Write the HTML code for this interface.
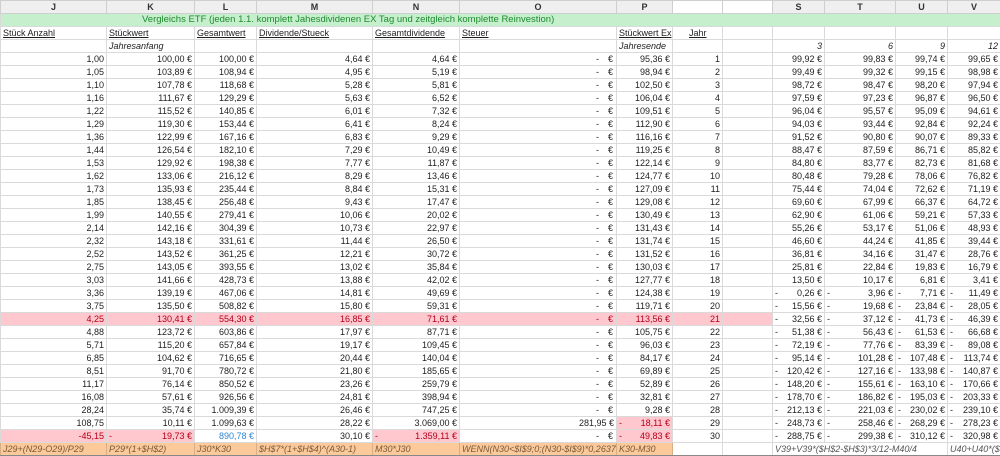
<!DOCTYPE html>
<html><head><meta charset="utf-8"><style>
html,body{margin:0;padding:0;background:#fff;width:1000px;height:456px;overflow:hidden}
table{border-collapse:collapse;table-layout:fixed;width:1000px;font-family:"Liberation Sans",sans-serif;font-size:9px;color:#1e1e1e}
td{height:12px;padding:0 2px;border:1px solid #dadada;text-align:right;white-space:nowrap;overflow:hidden;line-height:12px}
tr.h td{background:#efefef;text-align:center;font-weight:bold;color:#333;border-bottom:1px solid #a8a8a8;border-color:#cfcfcf}
tr.h td.w{background:#fff}
td.t{background:#c6efce;color:#1f8a2e;text-align:left;padding-left:141px;font-size:9.5px}
td.u{text-align:left}
td.u span{text-decoration:underline}
td.it{font-style:italic}
td.l{text-align:left}
i{float:left;font-style:normal}
td.o{padding-right:3px}
.d{margin-right:9px}
.p{background:#ffc7ce;color:#b3001b}
.b{color:#2f86d8}
tr.f td{background:#fbc99a;text-align:left;font-style:italic;color:#7a5a3a;border-color:#d8ae86;border-bottom:1px solid #888}
tr.f td.w{background:#fff;border-color:#dadada;border-bottom:1px solid #888}
</style></head><body>
<table>
<colgroup><col style="width:106px"><col style="width:88px"><col style="width:62px"><col style="width:116px"><col style="width:87px"><col style="width:157px"><col style="width:56px"><col style="width:50px"><col style="width:50px"><col style="width:52px"><col style="width:71px"><col style="width:52px"><col style="width:53px"></colgroup>
<tr class="h"><td>J</td><td>K</td><td>L</td><td>M</td><td>N</td><td>O</td><td>P</td><td class="w"></td><td class="w"></td><td>S</td><td>T</td><td>U</td><td>V</td></tr>
<tr><td colspan="13" class="t">Vergleichs ETF (jeden 1.1. komplett Jahesdividenen EX Tag und zeitgleich komplette Reinvestion)</td></tr>
<tr><td class="u"><span>Stück Anzahl</span></td><td class="u"><span>Stückwert</span></td><td class="u"><span>Gesamtwert</span></td><td class="u"><span>Dividende/Stueck</span></td><td class="u"><span>Gesamtdividende</span></td><td class="u"><span>Steuer</span></td><td class="u"><span>Stückwert Ex</span></td><td class="u" style="padding-left:16px"><span>Jahr</span></td><td></td><td></td><td></td><td></td><td></td></tr>
<tr><td></td><td class="l it">Jahresanfang</td><td></td><td></td><td></td><td></td><td class="l it">Jahresende</td><td></td><td></td><td class="it">3</td><td class="it">6</td><td class="it">9</td><td class="it">12</td></tr>
<tr><td>1,00</td><td>100,00 €</td><td>100,00 €</td><td>4,64 €</td><td>4,64 €</td><td class="o"><span class="d">-</span>€</td><td>95,36 €</td><td>1</td><td></td><td>99,92 €</td><td>99,83 €</td><td>99,74 €</td><td>99,65 €</td></tr>
<tr><td>1,05</td><td>103,89 €</td><td>108,94 €</td><td>4,95 €</td><td>5,19 €</td><td class="o"><span class="d">-</span>€</td><td>98,94 €</td><td>2</td><td></td><td>99,49 €</td><td>99,32 €</td><td>99,15 €</td><td>98,98 €</td></tr>
<tr><td>1,10</td><td>107,78 €</td><td>118,68 €</td><td>5,28 €</td><td>5,81 €</td><td class="o"><span class="d">-</span>€</td><td>102,50 €</td><td>3</td><td></td><td>98,72 €</td><td>98,47 €</td><td>98,20 €</td><td>97,94 €</td></tr>
<tr><td>1,16</td><td>111,67 €</td><td>129,29 €</td><td>5,63 €</td><td>6,52 €</td><td class="o"><span class="d">-</span>€</td><td>106,04 €</td><td>4</td><td></td><td>97,59 €</td><td>97,23 €</td><td>96,87 €</td><td>96,50 €</td></tr>
<tr><td>1,22</td><td>115,52 €</td><td>140,85 €</td><td>6,01 €</td><td>7,32 €</td><td class="o"><span class="d">-</span>€</td><td>109,51 €</td><td>5</td><td></td><td>96,04 €</td><td>95,57 €</td><td>95,09 €</td><td>94,61 €</td></tr>
<tr><td>1,29</td><td>119,30 €</td><td>153,44 €</td><td>6,41 €</td><td>8,24 €</td><td class="o"><span class="d">-</span>€</td><td>112,90 €</td><td>6</td><td></td><td>94,03 €</td><td>93,44 €</td><td>92,84 €</td><td>92,24 €</td></tr>
<tr><td>1,36</td><td>122,99 €</td><td>167,16 €</td><td>6,83 €</td><td>9,29 €</td><td class="o"><span class="d">-</span>€</td><td>116,16 €</td><td>7</td><td></td><td>91,52 €</td><td>90,80 €</td><td>90,07 €</td><td>89,33 €</td></tr>
<tr><td>1,44</td><td>126,54 €</td><td>182,10 €</td><td>7,29 €</td><td>10,49 €</td><td class="o"><span class="d">-</span>€</td><td>119,25 €</td><td>8</td><td></td><td>88,47 €</td><td>87,59 €</td><td>86,71 €</td><td>85,82 €</td></tr>
<tr><td>1,53</td><td>129,92 €</td><td>198,38 €</td><td>7,77 €</td><td>11,87 €</td><td class="o"><span class="d">-</span>€</td><td>122,14 €</td><td>9</td><td></td><td>84,80 €</td><td>83,77 €</td><td>82,73 €</td><td>81,68 €</td></tr>
<tr><td>1,62</td><td>133,06 €</td><td>216,12 €</td><td>8,29 €</td><td>13,46 €</td><td class="o"><span class="d">-</span>€</td><td>124,77 €</td><td>10</td><td></td><td>80,48 €</td><td>79,28 €</td><td>78,06 €</td><td>76,82 €</td></tr>
<tr><td>1,73</td><td>135,93 €</td><td>235,44 €</td><td>8,84 €</td><td>15,31 €</td><td class="o"><span class="d">-</span>€</td><td>127,09 €</td><td>11</td><td></td><td>75,44 €</td><td>74,04 €</td><td>72,62 €</td><td>71,19 €</td></tr>
<tr><td>1,85</td><td>138,45 €</td><td>256,48 €</td><td>9,43 €</td><td>17,47 €</td><td class="o"><span class="d">-</span>€</td><td>129,08 €</td><td>12</td><td></td><td>69,60 €</td><td>67,99 €</td><td>66,37 €</td><td>64,72 €</td></tr>
<tr><td>1,99</td><td>140,55 €</td><td>279,41 €</td><td>10,06 €</td><td>20,02 €</td><td class="o"><span class="d">-</span>€</td><td>130,49 €</td><td>13</td><td></td><td>62,90 €</td><td>61,06 €</td><td>59,21 €</td><td>57,33 €</td></tr>
<tr><td>2,14</td><td>142,16 €</td><td>304,39 €</td><td>10,73 €</td><td>22,97 €</td><td class="o"><span class="d">-</span>€</td><td>131,43 €</td><td>14</td><td></td><td>55,26 €</td><td>53,17 €</td><td>51,06 €</td><td>48,93 €</td></tr>
<tr><td>2,32</td><td>143,18 €</td><td>331,61 €</td><td>11,44 €</td><td>26,50 €</td><td class="o"><span class="d">-</span>€</td><td>131,74 €</td><td>15</td><td></td><td>46,60 €</td><td>44,24 €</td><td>41,85 €</td><td>39,44 €</td></tr>
<tr><td>2,52</td><td>143,52 €</td><td>361,25 €</td><td>12,21 €</td><td>30,72 €</td><td class="o"><span class="d">-</span>€</td><td>131,52 €</td><td>16</td><td></td><td>36,81 €</td><td>34,16 €</td><td>31,47 €</td><td>28,76 €</td></tr>
<tr><td>2,75</td><td>143,05 €</td><td>393,55 €</td><td>13,02 €</td><td>35,84 €</td><td class="o"><span class="d">-</span>€</td><td>130,03 €</td><td>17</td><td></td><td>25,81 €</td><td>22,84 €</td><td>19,83 €</td><td>16,79 €</td></tr>
<tr><td>3,03</td><td>141,66 €</td><td>428,73 €</td><td>13,88 €</td><td>42,02 €</td><td class="o"><span class="d">-</span>€</td><td>127,77 €</td><td>18</td><td></td><td>13,50 €</td><td>10,17 €</td><td>6,81 €</td><td>3,41 €</td></tr>
<tr><td>3,36</td><td>139,19 €</td><td>467,06 €</td><td>14,81 €</td><td>49,69 €</td><td class="o"><span class="d">-</span>€</td><td>124,38 €</td><td>19</td><td></td><td><i>-</i>0,26 €</td><td><i>-</i>3,96 €</td><td><i>-</i>7,71 €</td><td><i>-</i>11,49 €</td></tr>
<tr><td>3,75</td><td>135,50 €</td><td>508,82 €</td><td>15,80 €</td><td>59,31 €</td><td class="o"><span class="d">-</span>€</td><td>119,71 €</td><td>20</td><td></td><td><i>-</i>15,56 €</td><td><i>-</i>19,68 €</td><td><i>-</i>23,84 €</td><td><i>-</i>28,05 €</td></tr>
<tr><td class="p">4,25</td><td class="p">130,41 €</td><td class="p">554,30 €</td><td class="p">16,85 €</td><td class="p">71,61 €</td><td class="o p"><span class="d">-</span>€</td><td class="p">113,56 €</td><td class="p">21</td><td class="p"></td><td><i>-</i>32,56 €</td><td><i>-</i>37,12 €</td><td><i>-</i>41,73 €</td><td><i>-</i>46,39 €</td></tr>
<tr><td>4,88</td><td>123,72 €</td><td>603,86 €</td><td>17,97 €</td><td>87,71 €</td><td class="o"><span class="d">-</span>€</td><td>105,75 €</td><td>22</td><td></td><td><i>-</i>51,38 €</td><td><i>-</i>56,43 €</td><td><i>-</i>61,53 €</td><td><i>-</i>66,68 €</td></tr>
<tr><td>5,71</td><td>115,20 €</td><td>657,84 €</td><td>19,17 €</td><td>109,45 €</td><td class="o"><span class="d">-</span>€</td><td>96,03 €</td><td>23</td><td></td><td><i>-</i>72,19 €</td><td><i>-</i>77,76 €</td><td><i>-</i>83,39 €</td><td><i>-</i>89,08 €</td></tr>
<tr><td>6,85</td><td>104,62 €</td><td>716,65 €</td><td>20,44 €</td><td>140,04 €</td><td class="o"><span class="d">-</span>€</td><td>84,17 €</td><td>24</td><td></td><td><i>-</i>95,14 €</td><td><i>-</i>101,28 €</td><td><i>-</i>107,48 €</td><td><i>-</i>113,74 €</td></tr>
<tr><td>8,51</td><td>91,70 €</td><td>780,72 €</td><td>21,80 €</td><td>185,65 €</td><td class="o"><span class="d">-</span>€</td><td>69,89 €</td><td>25</td><td></td><td><i>-</i>120,42 €</td><td><i>-</i>127,16 €</td><td><i>-</i>133,98 €</td><td><i>-</i>140,87 €</td></tr>
<tr><td>11,17</td><td>76,14 €</td><td>850,52 €</td><td>23,26 €</td><td>259,79 €</td><td class="o"><span class="d">-</span>€</td><td>52,89 €</td><td>26</td><td></td><td><i>-</i>148,20 €</td><td><i>-</i>155,61 €</td><td><i>-</i>163,10 €</td><td><i>-</i>170,66 €</td></tr>
<tr><td>16,08</td><td>57,61 €</td><td>926,56 €</td><td>24,81 €</td><td>398,94 €</td><td class="o"><span class="d">-</span>€</td><td>32,81 €</td><td>27</td><td></td><td><i>-</i>178,70 €</td><td><i>-</i>186,82 €</td><td><i>-</i>195,03 €</td><td><i>-</i>203,33 €</td></tr>
<tr><td>28,24</td><td>35,74 €</td><td>1.009,39 €</td><td>26,46 €</td><td>747,25 €</td><td class="o"><span class="d">-</span>€</td><td>9,28 €</td><td>28</td><td></td><td><i>-</i>212,13 €</td><td><i>-</i>221,03 €</td><td><i>-</i>230,02 €</td><td><i>-</i>239,10 €</td></tr>
<tr><td>108,75</td><td>10,11 €</td><td>1.099,63 €</td><td>28,22 €</td><td>3.069,00 €</td><td>281,95 €</td><td class="p"><i>-</i>18,11 €</td><td>29</td><td></td><td><i>-</i>248,73 €</td><td><i>-</i>258,46 €</td><td><i>-</i>268,29 €</td><td><i>-</i>278,23 €</td></tr>
<tr><td class="p">-45,15</td><td class="p"><i>-</i>19,73 €</td><td class="b">890,78 €</td><td>30,10 €</td><td class="p"><i>-</i>1.359,11 €</td><td class="o"><span class="d">-</span>€</td><td class="p"><i>-</i>49,83 €</td><td>30</td><td></td><td><i>-</i>288,75 €</td><td><i>-</i>299,38 €</td><td><i>-</i>310,12 €</td><td><i>-</i>320,98 €</td></tr>
<tr class="f"><td>J29+(N29-O29)/P29</td><td>P29*(1+$H$2)</td><td>J30*K30</td><td>$H$7*(1+$H$4)^(A30-1)</td><td>M30*J30</td><td>WENN(N30&lt;$I$9;0;(N30-$I$9)*0,26375)</td><td>K30-M30</td><td class="w"></td><td class="w"></td><td class="w" colspan="3" style="color:#555">V39+V39*($H$2-$H$3)*3/12-M40/4</td><td class="w" style="color:#555">U40+U40*($H$2</td></tr>
</table>
</body></html>
